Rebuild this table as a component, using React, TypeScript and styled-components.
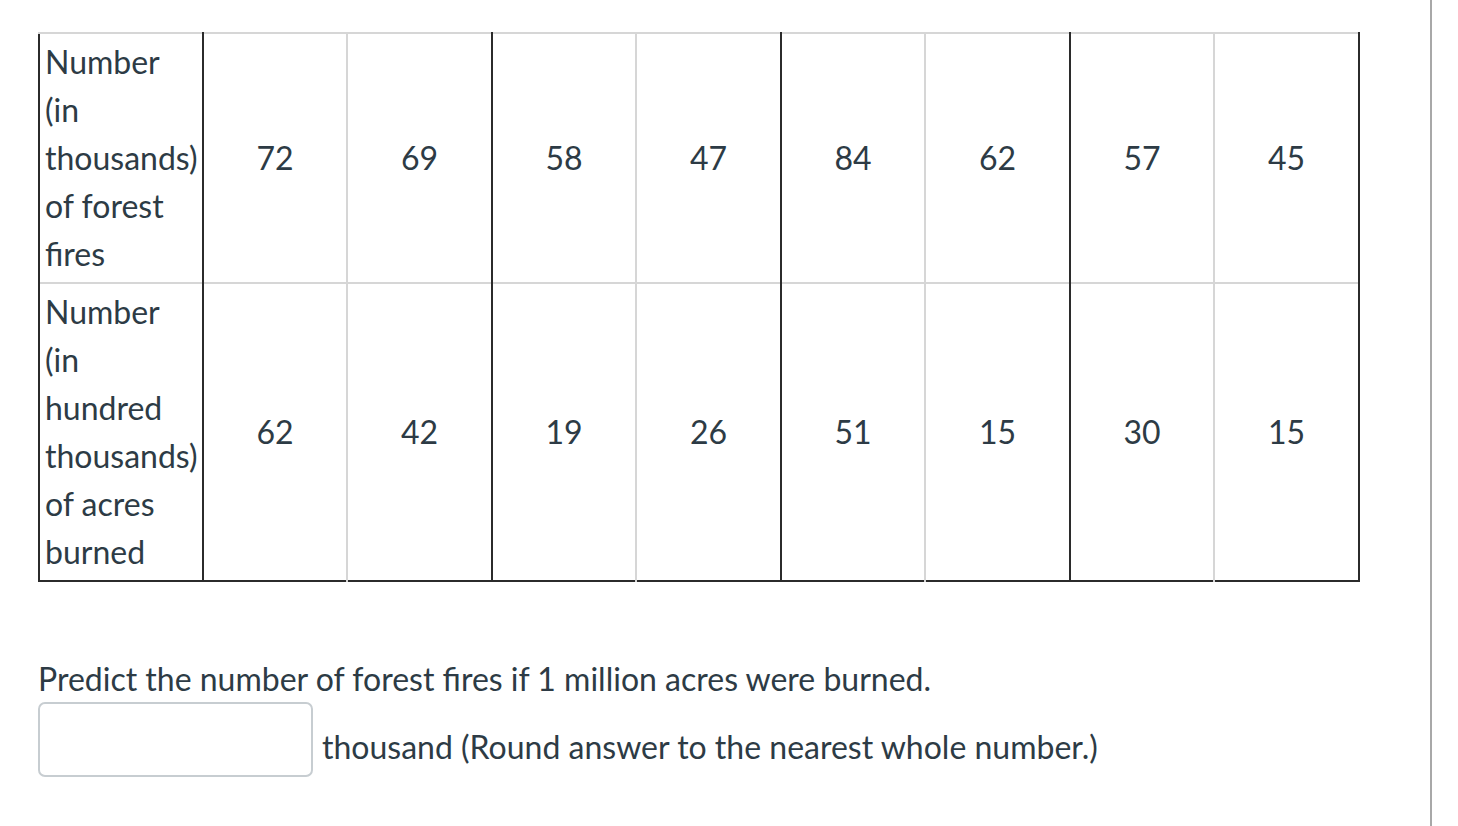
import styled, { createGlobalStyle } from 'styled-components';

const COLORS = {
  text: '#2d3b45',
  dark: '#2b2b2b',
  light: '#d6d6d6',
  inputBorder: '#c7cdd1',
  rule: '#a8a8a8',
};

const GlobalStyle = createGlobalStyle`
  html, body {
    margin: 0;
    padding: 0;
    background: #ffffff;
  }
  body {
    font-family: Lato, 'Open Sans', sans-serif;
    color: ${COLORS.text};
  }
`;

const Page = styled.div`
  display: flex;
  width: 1458px;
  height: 826px;
  overflow: hidden;
`;

const Content = styled.main`
  width: 1432px;
  padding: 32px 0 0 38px;
  box-sizing: border-box;
  border-right: 2px solid ${COLORS.rule};
`;

const DataTable = styled.table`
  border-collapse: collapse;
  table-layout: fixed;
  width: 1320px;
  font-size: 32px;
  line-height: 48px;
  border-top: 2px solid ${COLORS.dark};
  border-bottom: 2px solid ${COLORS.dark};
  border-right: 2px solid ${COLORS.dark};
`;

const HeadCell = styled.th`
  font-weight: 400;
  text-align: left;
  vertical-align: top;
  white-space: nowrap;
  padding: 4px 0 4px 5px;
  border-left: 2px solid ${COLORS.dark};
  border-right: 2px solid ${COLORS.dark};
  border-top: 2px solid ${COLORS.light};
`;

const HeadLine = styled.span`
  display: block;
`;

const ValueCell = styled.td<{ $dark: boolean }>`
  text-align: center;
  vertical-align: middle;
  padding: 4px 4px;
  border-top: 2px solid ${COLORS.light};
  border-right: 2px solid ${({ $dark }) => ($dark ? COLORS.dark : COLORS.light)};
`;

const Prompt = styled.p`
  margin: 73px 0 0;
  font-size: 32px;
  line-height: 47px;
`;

const AnswerRow = styled.div`
  display: flex;
  align-items: flex-end;
  gap: 9px;
`;

const AnswerInput = styled.input`
  width: 275px;
  height: 75px;
  box-sizing: border-box;
  border: 2px solid ${COLORS.inputBorder};
  border-radius: 7px;
  font: inherit;
  font-size: 32px;
  padding: 0 12px;
  color: ${COLORS.text};
  outline: none;
`;

const AnswerNote = styled.span`
  font-size: 32px;
  line-height: 48px;
  padding-bottom: 6px;
`;

const rows = [
  {
    label: ['Number', '(in', 'thousands)', 'of forest', 'fires'],
    values: [72, 69, 58, 47, 84, 62, 57, 45],
  },
  {
    label: ['Number', '(in', 'hundred', 'thousands)', 'of acres', 'burned'],
    values: [62, 42, 19, 26, 51, 15, 30, 15],
  },
];

export default function App() {
  return (
    <Page>
      <GlobalStyle />
      <Content>
        <DataTable>
          <colgroup>
            <col style={{ width: 164 }} />
            {rows[0].values.map((_, i) => (
              <col key={i} style={{ width: i % 2 === 0 ? 144 : 145 }} />
            ))}
          </colgroup>
          <tbody>
            {rows.map((row) => (
              <tr key={row.label.join(' ')}>
                <HeadCell scope="row">
                  {row.label.map((line) => (
                    <HeadLine key={line}>{line}</HeadLine>
                  ))}
                </HeadCell>
                {row.values.map((v, i) => (
                  <ValueCell key={i} $dark={i % 2 === 1}>
                    {v}
                  </ValueCell>
                ))}
              </tr>
            ))}
          </tbody>
        </DataTable>
        <Prompt>Predict the number of forest fires if 1 million acres were burned.</Prompt>
        <AnswerRow>
          <AnswerInput type="text" aria-label="answer" />
          <AnswerNote>thousand (Round answer to the nearest whole number.)</AnswerNote>
        </AnswerRow>
      </Content>
    </Page>
  );
}
